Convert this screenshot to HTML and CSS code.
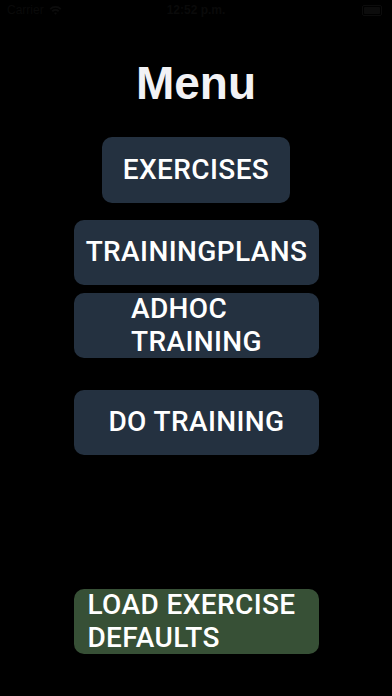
FILE: index.html
```html
<!DOCTYPE html>
<html lang="en">
<head>
<meta charset="utf-8">
<title>Menu</title>
<link rel="stylesheet" href="styles.css">
</head>
<body>
<div class="screen">
  <div class="statusbar">
    <div class="sb-left">
      <span class="carrier">Carrier</span>
      <svg class="wifi" width="13" height="10" viewBox="0 0 13 10">
        <path d="M0.6 3.4 A8.5 8.5 0 0 1 12.4 3.4 L11.2 4.7 A6.7 6.7 0 0 0 1.8 4.7 Z" fill="#0c0c0c"/>
        <path d="M2.7 5.6 A5.6 5.6 0 0 1 10.3 5.6 L9.1 6.9 A3.8 3.8 0 0 0 3.9 6.9 Z" fill="#0c0c0c"/>
        <path d="M5 8.1 A2.3 2.3 0 0 1 8 8.1 L6.5 9.7 Z" fill="#0c0c0c"/>
      </svg>
    </div>
    <span class="time">12:52 p.m.</span>
    <div class="sb-right">
      <span class="battery"><span class="battery-fill"></span></span>
    </div>
  </div>

  <h1 class="title">Menu</h1>

  <div class="menu">
    <button class="btn btn-small gap-first"><span class="label">EXERCISES</span></button>
    <button class="btn gap-17"><span class="label">TRAININGPLANS</span></button>
    <button class="btn gap-8"><span class="label">ADHOC<br>TRAINING</span></button>
    <button class="btn gap-32"><span class="label">DO TRAINING</span></button>
    <button class="btn btn-green gap-bottom"><span class="label label-wide">LOAD EXERCISE<br>DEFAULTS</span></button>
  </div>
</div>
</body>
</html>
```

FILE: styles.css
```css
html, body {
  margin: 0;
  padding: 0;
  background: #000;
}

.screen {
  width: 392px;
  height: 696px;
  background: #000;
  display: flex;
  flex-direction: column;
  font-family: "Liberation Sans", Arial, sans-serif;
  overflow: hidden;
}

.statusbar {
  height: 20px;
  display: flex;
  align-items: center;
  justify-content: space-between;
  padding: 0 7px;
  color: #0a0a0a;
  font-size: 12px;
  position: relative;
}

.sb-left {
  display: flex;
  align-items: center;
  gap: 5px;
}

.time {
  position: absolute;
  left: 0;
  right: 0;
  text-align: center;
  font-weight: bold;
}

.sb-right {
  display: flex;
  align-items: center;
  padding-right: 3px;
}

.battery {
  width: 16px;
  height: 7px;
  border: 1px solid #0c0c0c;
  border-radius: 2px;
  padding: 1px;
  box-sizing: content-box;
  display: flex;
}

.battery-fill {
  flex: 1;
  background: #0c0c0c;
  border-radius: 1px;
}

.title {
  margin: 37px 0 0;
  height: 52px;
  line-height: 52px;
  font-size: 46px;
  font-weight: bold;
  color: #f2f2f5;
  text-align: center;
}

.menu {
  display: flex;
  flex-direction: column;
  align-items: center;
}

.btn {
  width: 245px;
  height: 65px;
  margin-left: 1px;
  border: none;
  border-radius: 10px;
  background: #243140;
  color: #fff;
  font-family: Roboto, "Liberation Sans", Arial, sans-serif;
  font-weight: 500;
  font-size: 28px;
  letter-spacing: 0.4px;
  line-height: 32.5px;
  padding: 0 8px;
  display: flex;
  align-items: center;
  justify-content: center;
  box-sizing: border-box;
}

.label {
  display: inline-block;
  white-space: nowrap;
  text-align: left;
}

.label-wide {
  padding-right: 10px;
}

.btn-small {
  width: 188px;
  height: 66px;
  margin-left: 0;
}

.btn-green {
  background: #375036;
}

.gap-first { margin-top: 28px; }
.gap-17 { margin-top: 17px; }
.gap-8 { margin-top: 8px; }
.gap-32 { margin-top: 32px; }
.gap-bottom { margin-top: 134px; }
```
